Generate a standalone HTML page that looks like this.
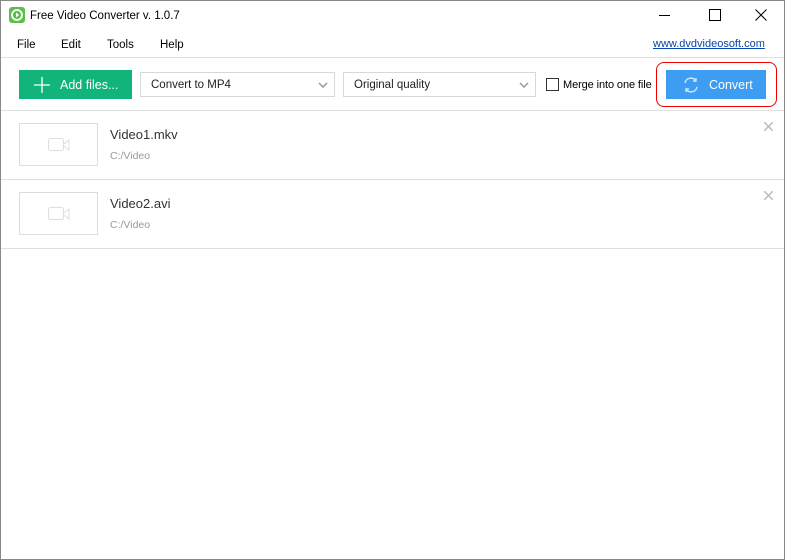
<!DOCTYPE html>
<html><head><meta charset="utf-8"><style>
body{margin:0;width:785px;height:560px;background:#fff;font-family:"Liberation Sans",Arial,sans-serif;position:relative;overflow:hidden}
.frame{position:absolute;left:0;top:0;width:785px;height:560px;box-sizing:border-box;border:1px solid #888;pointer-events:none}
.a{position:absolute;white-space:nowrap}
.sel{position:absolute;top:72px;height:25px;border:1px solid #d8d8d8;background:#fff;font-size:11.5px;color:#222;line-height:25px;padding-left:10px;box-sizing:border-box}
.sel svg{position:absolute;right:6px;top:9px}
.thumb{position:absolute;left:19px;width:79px;height:43px;border:1px solid #dcdcdc;box-sizing:border-box}
.line{position:absolute;left:0;right:0;height:1px;background:#e0e0e0}
</style></head><body>
<div class="a" style="left:9px;top:7px;width:16px;height:16px;background:#5cbf4c;border-radius:3px"></div>
<svg class="a" style="left:9px;top:7px" width="16" height="16"><circle cx="8" cy="8" r="5" fill="none" stroke="#fff" stroke-width="1.8"/><path d="M7 5.5l3 2.5-3 2.5z" fill="#fff"/></svg>
<div class="a" style="left:30px;top:10px;font-size:11.5px">Free Video Converter v. 1.0.7</div>
<div class="a" style="left:659px;top:15px;width:11px;height:1px;background:#000"></div>
<div class="a" style="left:709px;top:9px;width:10px;height:10px;border:1px solid #000"></div>
<svg class="a" style="left:755px;top:9px" width="12" height="12"><path d="M0.5 .5l11 11M11.5 .5l-11 11" stroke="#000"/></svg>
<div class="a" style="left:17px;top:39px;font-size:11.5px">File</div>
<div class="a" style="left:61px;top:39px;font-size:11.5px">Edit</div>
<div class="a" style="left:107px;top:39px;font-size:11.5px">Tools</div>
<div class="a" style="left:160px;top:39px;font-size:11.5px">Help</div>
<div class="a" style="left:653px;top:38px;font-size:11px;color:#0645ad;text-decoration:underline">www.dvdvideosoft.com</div>
<div class="line" style="top:57px"></div>
<div class="a" style="left:19px;top:70px;width:113px;height:29px;background:#12b579"></div>
<svg class="a" style="left:34px;top:77px" width="16" height="16"><path d="M8 0v16M0 8h16" stroke="#fff" stroke-width="1.3"/></svg>
<div class="a" style="left:60px;top:78px;font-size:12.5px;color:#fff">Add files...</div>
<div class="sel" style="left:140px;width:195px">Convert to MP4<svg width="10" height="6"><path d="M1 1l4 4 4-4" stroke="#999" fill="none" stroke-width="1.5"/></svg></div>
<div class="sel" style="left:343px;width:193px">Original quality<svg width="10" height="6"><path d="M1 1l4 4 4-4" stroke="#999" fill="none" stroke-width="1.5"/></svg></div>
<div class="a" style="left:546px;top:78px;width:13px;height:13px;border:1px solid #333;box-sizing:border-box"></div>
<div class="a" style="left:563px;top:79px;font-size:11px;letter-spacing:-0.1px">Merge into one file</div>
<div class="a" style="left:656px;top:62px;width:121px;height:45px;border:1.5px solid #e00;border-radius:8px;box-sizing:border-box"></div>
<div class="a" style="left:666px;top:70px;width:100px;height:29px;background:#3d9df3"></div>
<svg class="a" style="left:682px;top:76px" width="18" height="18"><path d="M3 7a6 6 0 0 1 11-2M15 11a6 6 0 0 1-11 2" stroke="#cfe6fb" fill="none" stroke-width="1.4"/><path d="M14 2v3h-3M4 16v-3h3" stroke="#cfe6fb" fill="none" stroke-width="1.4"/></svg>
<div class="a" style="left:709px;top:78px;font-size:12.5px;color:#fff">Convert</div>
<div class="line" style="top:110px"></div>
<div class="thumb" style="top:123px"></div>
<svg class="a" style="left:48px;top:138px" width="22" height="14"><rect x="0.5" y="0.5" width="15" height="12" rx="2" fill="none" stroke="#ddd"/><path d="M16 6l5-4v10l-5-4" fill="none" stroke="#ddd"/></svg>
<div class="a" style="left:110px;top:127px;font-size:13px;color:#333">Video1.mkv</div>
<div class="a" style="left:110px;top:150px;font-size:10.5px;color:#999">C:/Video</div>
<svg class="a" style="left:764px;top:122px" width="9" height="9"><path d="M0 0l9 9M9 0l-9 9" stroke="#bbb" stroke-width="1.5"/></svg>
<div class="line" style="top:179px"></div>
<div class="thumb" style="top:192px"></div>
<svg class="a" style="left:48px;top:207px" width="22" height="14"><rect x="0.5" y="0.5" width="15" height="12" rx="2" fill="none" stroke="#ddd"/><path d="M16 6l5-4v10l-5-4" fill="none" stroke="#ddd"/></svg>
<div class="a" style="left:110px;top:196px;font-size:13px;color:#333">Video2.avi</div>
<div class="a" style="left:110px;top:219px;font-size:10.5px;color:#999">C:/Video</div>
<svg class="a" style="left:764px;top:191px" width="9" height="9"><path d="M0 0l9 9M9 0l-9 9" stroke="#bbb" stroke-width="1.5"/></svg>
<div class="line" style="top:248px"></div>
<div class="frame"></div>
</body></html>
